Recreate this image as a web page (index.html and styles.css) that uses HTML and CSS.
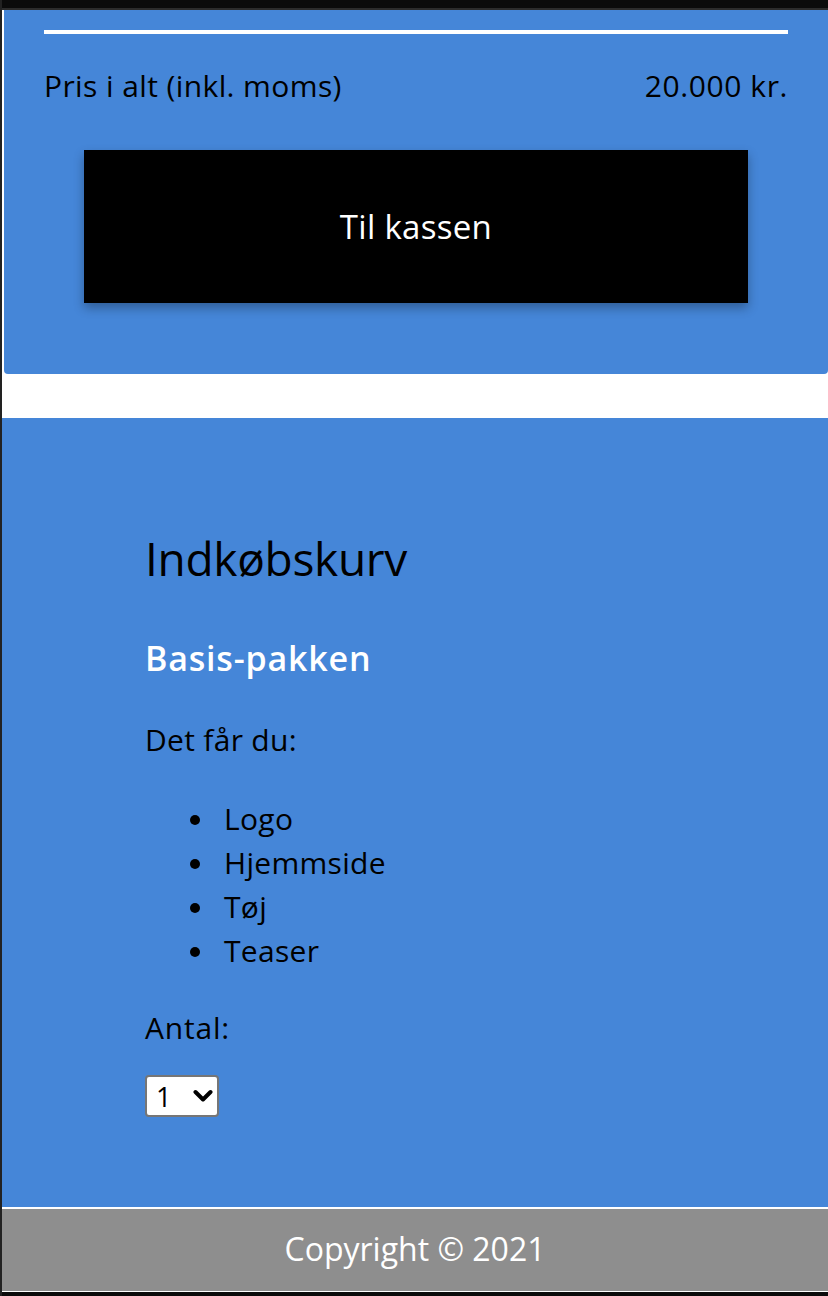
FILE: index.html
```html
<!DOCTYPE html>
<html lang="da">
<head>
<meta charset="utf-8">
<title>Indkøbskurv</title>
<link rel="stylesheet" href="styles.css">
</head>
<body>
<div class="frame">
  <div class="topbar"></div>
  <div class="page">
    <section class="summary">
      <hr class="divider">
      <div class="total-row">
        <span class="total-label">Pris i alt (inkl. moms)</span>
        <span class="total-price">20.000 kr.</span>
      </div>
      <button class="checkout" type="button">Til kassen</button>
    </section>
    <div class="spacer"></div>
    <main class="cart">
      <h1 class="cart-title">Indkøbskurv</h1>
      <h2 class="package">Basis-pakken</h2>
      <p class="intro">Det får du:</p>
      <ul class="features">
        <li>Logo</li>
        <li>Hjemmside</li>
        <li>Tøj</li>
        <li>Teaser</li>
      </ul>
      <p class="qty-label">Antal:</p>
      <div class="qty-select">
        <span class="qty-value">1</span>
        <svg class="chev" viewBox="0 0 20 14" width="20" height="14" aria-hidden="true"><path d="M2.5 3 L10 10.5 L17.5 3" fill="none" stroke="#000" stroke-width="4" stroke-linecap="round" stroke-linejoin="round"/></svg>
      </div>
    </main>
    <footer class="footer">Copyright © 2021</footer>
  </div>
  <div class="bottombar"></div>
</div>
</body>
</html>
```
FILE: styles.css
```css
html, body {
  margin: 0;
  padding: 0;
}
body {
  background: #ffffff;
  font-family: "Open Sans", "Noto Sans", sans-serif;
  color: #000;
}
.frame {
  display: flex;
  flex-direction: column;
  min-height: 1296px;
  border-left: 2px solid #222222;
  box-sizing: border-box;
}
.topbar {
  height: 8px;
  background: #0b0b0b;
  border-bottom: 2px solid #2c2c2c;
}
.page {
  display: flex;
  flex-direction: column;
  flex: 1;
}
.summary {
  margin-left: 2px;
  background: #4586d8;
  border-radius: 0 0 4px 4px;
  padding: 20px 40px 70px 40px;
  height: 364px;
  box-sizing: border-box;
}
.divider {
  margin: 0;
  border: 0;
  height: 4px;
  background: #ffffff;
}
.total-row {
  display: flex;
  justify-content: space-between;
  align-items: baseline;
  margin-top: 32px;
  font-size: 30px;
  line-height: 40px;
  letter-spacing: 0.4px;
}
.total-price {
  letter-spacing: 0.6px;
}
.checkout {
  display: block;
  width: calc(100% - 80px);
  height: 153px;
  margin: 44px auto 0;
  background: #000;
  color: #fff;
  border: 0;
  font-family: inherit;
  font-size: 33px;
  letter-spacing: 0.3px;
  box-shadow: 0 5px 10px rgba(0, 0, 0, 0.3);
}
.spacer {
  height: 44px;
}
.cart {
  background: #4586d8;
  padding: 108px 0 90px 143px;
}
.cart-title {
  margin: 0;
  font-size: 46px;
  font-weight: 400;
  line-height: 65px;
  letter-spacing: -0.3px;
}
.package {
  margin: 44px 0 0;
  font-size: 34px;
  font-weight: 600;
  line-height: 46px;
  color: #fff;
  letter-spacing: 0.8px;
}
.intro, .qty-label {
  margin: 37px 0 0;
  font-size: 30px;
  line-height: 44px;
  letter-spacing: 0.3px;
}
.features {
  margin: 35px 0 0;
  padding-left: 45px;
  list-style: none;
  font-size: 30px;
  line-height: 44px;
  letter-spacing: 0.3px;
}
.features li {
  display: flex;
  align-items: flex-start;
}
.features li::before {
  content: "";
  flex: none;
  width: 10px;
  height: 10px;
  margin: 18px 24px 0 0;
  border-radius: 50%;
  background: #000;
}
.qty-label {
  margin-top: 33px;
  letter-spacing: 0.8px;
}
.qty-select {
  margin-top: 25px;
  width: 74px;
  height: 42px;
  box-sizing: border-box;
  border: 2px solid #767676;
  border-radius: 4px;
  background: #fff;
  display: flex;
  align-items: center;
  justify-content: space-between;
  padding: 0 4px 0 9px;
  font-size: 27px;
}
.chev {
  width: 20px;
  height: 14px;
}
.footer {
  border-top: 2px solid #ffffff;
  background: #8e8e8e;
  color: #fff;
  text-align: center;
  height: 84px;
  box-sizing: border-box;
  padding-bottom: 4px;
  line-height: 80px;
  font-size: 32px;
}
.bottombar {
  height: 4px;
  background: #0b0b0b;
}
```
